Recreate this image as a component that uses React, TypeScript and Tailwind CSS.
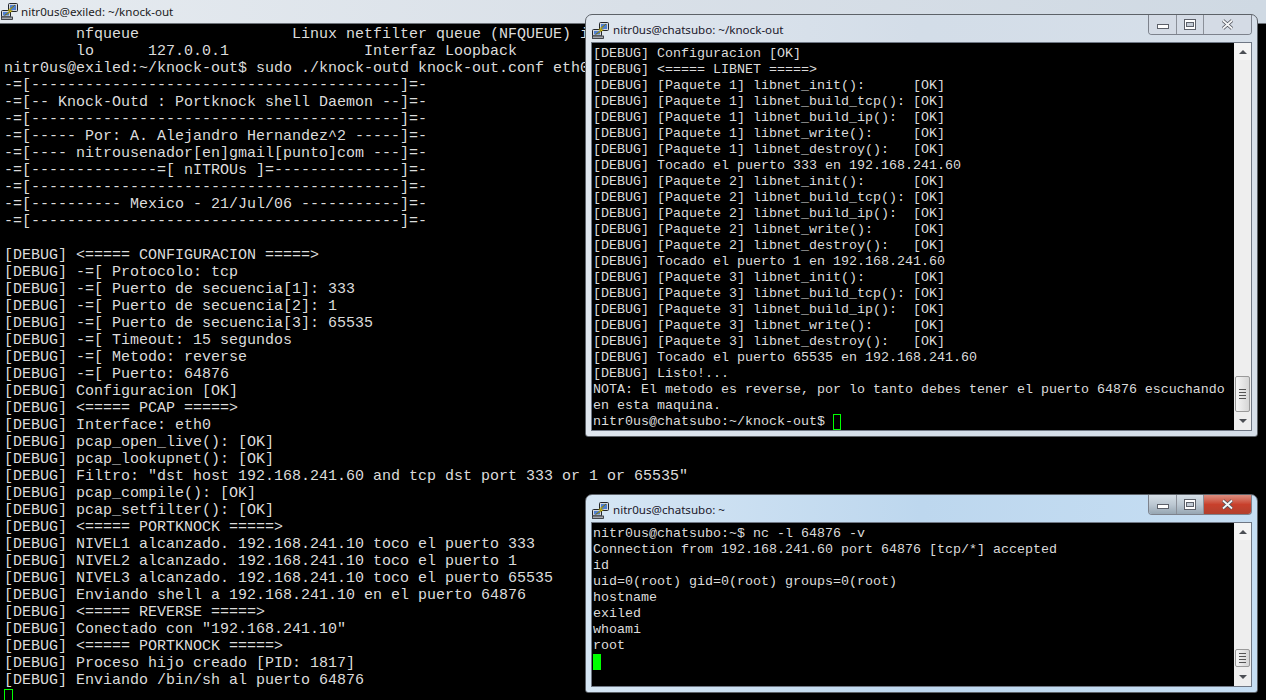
import type { ReactNode } from "react";

const DASH = "-=[-----------------------------------------]=-";

const leftLines = [
  "        nfqueue                 Linux netfilter queue (NFQUEUE) i",
  "        lo      127.0.0.1               Interfaz Loopback",
  "nitr0us@exiled:~/knock-out$ sudo ./knock-outd knock-out.conf eth0",
  DASH,
  "-=[-- Knock-Outd : Portknock shell Daemon --]=-",
  DASH,
  "-=[----- Por: A. Alejandro Hernandez^2 -----]=-",
  "-=[---- nitrousenador[en]gmail[punto]com ---]=-",
  "-=[--------------=[ nITROUs ]=--------------]=-",
  DASH,
  "-=[---------- Mexico - 21/Jul/06 -----------]=-",
  DASH,
  "",
  "[DEBUG] <===== CONFIGURACION =====>",
  "[DEBUG] -=[ Protocolo: tcp",
  "[DEBUG] -=[ Puerto de secuencia[1]: 333",
  "[DEBUG] -=[ Puerto de secuencia[2]: 1",
  "[DEBUG] -=[ Puerto de secuencia[3]: 65535",
  "[DEBUG] -=[ Timeout: 15 segundos",
  "[DEBUG] -=[ Metodo: reverse",
  "[DEBUG] -=[ Puerto: 64876",
  "[DEBUG] Configuracion [OK]",
  "[DEBUG] <===== PCAP =====>",
  "[DEBUG] Interface: eth0",
  "[DEBUG] pcap_open_live(): [OK]",
  "[DEBUG] pcap_lookupnet(): [OK]",
  '[DEBUG] Filtro: "dst host 192.168.241.60 and tcp dst port 333 or 1 or 65535"',
  "[DEBUG] pcap_compile(): [OK]",
  "[DEBUG] pcap_setfilter(): [OK]",
  "[DEBUG] <===== PORTKNOCK =====>",
  "[DEBUG] NIVEL1 alcanzado. 192.168.241.10 toco el puerto 333",
  "[DEBUG] NIVEL2 alcanzado. 192.168.241.10 toco el puerto 1",
  "[DEBUG] NIVEL3 alcanzado. 192.168.241.10 toco el puerto 65535",
  "[DEBUG] Enviando shell a 192.168.241.10 en el puerto 64876",
  "[DEBUG] <===== REVERSE =====>",
  '[DEBUG] Conectado con "192.168.241.10"',
  "[DEBUG] <===== PORTKNOCK =====>",
  "[DEBUG] Proceso hijo creado [PID: 1817]",
  "[DEBUG] Enviando /bin/sh al puerto 64876",
];

const paquete = (n: number) => [
  `[DEBUG] [Paquete ${n}] libnet_init():      [OK]`,
  `[DEBUG] [Paquete ${n}] libnet_build_tcp(): [OK]`,
  `[DEBUG] [Paquete ${n}] libnet_build_ip():  [OK]`,
  `[DEBUG] [Paquete ${n}] libnet_write():     [OK]`,
  `[DEBUG] [Paquete ${n}] libnet_destroy():   [OK]`,
];

const topLines = [
  "[DEBUG] Configuracion [OK]",
  "[DEBUG] <===== LIBNET =====>",
  ...paquete(1),
  "[DEBUG] Tocado el puerto 333 en 192.168.241.60",
  ...paquete(2),
  "[DEBUG] Tocado el puerto 1 en 192.168.241.60",
  ...paquete(3),
  "[DEBUG] Tocado el puerto 65535 en 192.168.241.60",
  "[DEBUG] Listo!...",
  "NOTA: El metodo es reverse, por lo tanto debes tener el puerto 64876 escuchando",
  "en esta maquina.",
];

const bottomLines = [
  "nitr0us@chatsubo:~$ nc -l 64876 -v",
  "Connection from 192.168.241.60 port 64876 [tcp/*] accepted",
  "id",
  "uid=0(root) gid=0(root) groups=0(root)",
  "hostname",
  "exiled",
  "whoami",
  "root",
];

function PuttyIcon() {
  return (
    <svg width="17" height="17" viewBox="0 0 17 17" className="shrink-0">
      <rect x="7.5" y="0.5" width="9" height="8" rx="1" fill="#d4d7dc" stroke="#23262c" />
      <rect x="9" y="2" width="6" height="5" fill="#4f7fd0" />
      <rect x="0.5" y="7.5" width="9" height="6.5" rx="1" fill="#d4d7dc" stroke="#23262c" />
      <rect x="2" y="9" width="6" height="3.5" fill="#4f7fd0" />
      <rect x="0.5" y="14" width="11" height="2.5" fill="#a4a8ae" stroke="#23262c" strokeWidth="0.8" />
      <path d="M14 2 L6.5 7.5 L9 8 L3.5 12.5 L11.5 8 L9 7.2 Z" fill="#f7e21c" stroke="#5a5200" strokeWidth="0.5" />
    </svg>
  );
}

function WindowButtons({ active }: { active: boolean }) {
  return (
    <div className="flex h-[20px] items-stretch overflow-hidden rounded-b-[4px] border border-t-0 border-[#7d828c] shrink-0">
      <div className={`flex w-[28px] items-center justify-center border-r border-[#8b9099] pt-[3px] ${active ? "bg-gradient-to-b from-[#d5dee6] via-[#bcc8d2] to-[#97a6b3]" : "bg-[#d4dbe5]"}`}>
        <div className="h-[5px] w-[12px] border border-[#5c6069] bg-white" />
      </div>
      <div className={`flex w-[27px] items-center justify-center border-r border-[#8b9099] ${active ? "bg-gradient-to-b from-[#d5dee6] via-[#bcc8d2] to-[#97a6b3]" : "bg-[#d4dbe5]"}`}>
        <div className="flex h-[11px] w-[12px] items-center justify-center border border-[#5c6069] bg-white">
          <div className="h-[5px] w-[8px] border border-[#5c6069] bg-[#c4ccd6]" />
        </div>
      </div>
      <div className={`flex w-[47px] items-center justify-center ${active ? "bg-gradient-to-b from-[#dc8e80] via-[#c8402c] to-[#b2402e]" : "bg-[#d4dbe5]"}`}>
        <svg width="13" height="11" viewBox="0 0 13 11">
          <path d="M2 1.5 L11 9.5 M11 1.5 L2 9.5" stroke="#4d5058" strokeWidth="3.4" />
          <path d="M2 1.5 L11 9.5 M11 1.5 L2 9.5" stroke="#f4f5f7" strokeWidth="1.8" />
        </svg>
      </div>
    </div>
  );
}

function Scrollbar({ thumb, thumbGap }: { thumb: string; thumbGap: string }) {
  return (
    <div className="flex w-[17px] shrink-0 flex-col items-center bg-[#eeeeee]">
      <div className="flex h-[17px] w-full items-center justify-center bg-[#f4f4f4]">
        <div className="h-0 w-0 border-x-[4px] border-b-[4px] border-x-transparent border-b-[#4c4f55]" />
      </div>
      <div className="flex-1" />
      <div className={`flex w-[15px] flex-col items-center justify-center gap-[2px] rounded-[2px] border border-[#9a9a9a] bg-gradient-to-r from-[#f6f6f6] to-[#d6d6d6] ${thumb}`}>
        <div className="h-px w-[7px] bg-[#555555]" />
        <div className="h-px w-[7px] bg-[#555555]" />
        <div className="h-px w-[7px] bg-[#555555]" />
        <div className="h-px w-[7px] bg-[#555555]" />
      </div>
      <div className={`flex w-full items-center justify-center ${thumbGap}`}>
        <div className="h-0 w-0 border-x-[4px] border-t-[4px] border-x-transparent border-t-[#4c4f55]" />
      </div>
    </div>
  );
}

function Terminal({ lines, children, className }: { lines: string[]; children?: ReactNode; className: string }) {
  return (
    <pre className={`overflow-hidden bg-black text-[#dcdcdc] [font-family:'Liberation_Mono',monospace] ${className}`}>
      {lines.map((line, i) => (
        <div key={i} className="h-[1lh] whitespace-pre">
          {line}
        </div>
      ))}
      {children}
    </pre>
  );
}

function SmallWindow({
  title,
  active,
  className,
  children,
}: {
  title: string;
  active: boolean;
  className: string;
  children: ReactNode;
}) {
  return (
    <div
      className={`absolute left-[585px] flex w-[673px] flex-col rounded-t-[7px] rounded-b-[3px] border border-[#5d6268] px-[5px] pb-[5px] ${
        active
          ? "bg-gradient-to-r from-[#d6e6f4] via-[#bdd7ee] to-[#c6def3]"
          : "bg-gradient-to-r from-[#dfe6ee] via-[#d3dde8] to-[#d6dfe9]"
      } ${className}`}
    >
      <div className="flex h-[27px] shrink-0 items-start justify-between">
        <div className="flex items-center gap-[4px] pt-[6px] pl-[1px]">
          <PuttyIcon />
          <span className="text-[11.6px] leading-[18px] text-[#20182c] [font-family:'Noto_Sans',sans-serif]">{title}</span>
        </div>
        <WindowButtons active={active} />
      </div>
      <div className="flex min-h-0 flex-1 border border-[#6f7784]">{children}</div>
    </div>
  );
}

export default function App() {
  return (
    <div className="relative h-[700px] w-[1266px] overflow-hidden bg-black">
      {/* ventana grande de atras */}
      <div className="flex h-[700px] flex-col">
        <div className="flex h-[24px] shrink-0 items-center gap-[3px] border-b border-[#6d7278] bg-gradient-to-r from-[#e6ebf0] via-[#d9e0e8] to-[#cfd9e3] pl-[1px]">
          <PuttyIcon />
          <span className="text-[11.6px] text-[#1c1c24] [font-family:'Noto_Sans',sans-serif]">nitr0us@exiled: ~/knock-out</span>
        </div>
        <Terminal lines={leftLines} className="flex-1 pl-[4px] pt-[2px] text-[15px] leading-[17px]">
          <div className="h-[12px] w-[9px] border border-[#00ff00]" />
        </Terminal>
      </div>

      <SmallWindow title="nitr0us@chatsubo: ~/knock-out" active={false} className="top-[14px] h-[423px]">
        <Terminal lines={topLines} className="flex-1 pl-[1px] pt-[3px] text-[13.333px] leading-[16px]">
          <div className="flex h-[16px] whitespace-pre">
            nitr0us@chatsubo:~/knock-out$ <div className="h-[16px] w-[8px] shrink-0 border border-[#00ff00]" />
          </div>
        </Terminal>
        <Scrollbar thumb="h-[36px]" thumbGap="h-[18px]" />
      </SmallWindow>

      <SmallWindow title="nitr0us@chatsubo: ~" active className="top-[494px] h-[199px]">
        <Terminal lines={bottomLines} className="flex-1 pl-[1px] pt-[3px] text-[13.333px] leading-[16px]">
          <div className="h-[16px] w-[8px] bg-[#00ff00]" />
        </Terminal>
        <Scrollbar thumb="h-[18px]" thumbGap="h-[19px]" />
      </SmallWindow>
    </div>
  );
}
